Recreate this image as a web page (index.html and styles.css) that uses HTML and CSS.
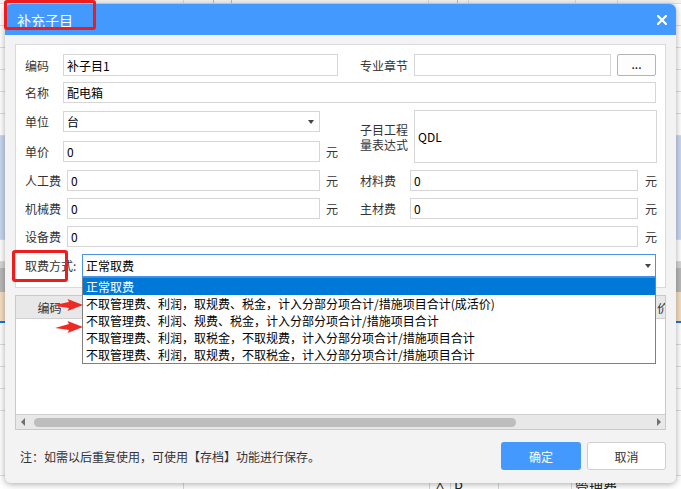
FILE: index.html
```html
<!DOCTYPE html>
<html lang="zh-CN">
<head>
<meta charset="utf-8">
<title>补充子目</title>
<link rel="stylesheet" href="styles.css">
</head>
<body>
<div class="app">
  <div class="app-row app-top">
    <span class="c c184"></span><span class="c c30 orange"></span><span class="c c18 orange"></span><span class="c c197"></span><span class="c c29 orange"></span><span class="c c11"></span><span class="c c107">¥ 2.00</span><span class="c c42">正</span><span class="c cflex">吸岸剧电箱</span>
  </div>
  <div class="app-row"></div>
  <div class="app-row"></div>
  <div class="app-row"></div>
  <div class="app-row"></div>
  <div class="app-row"></div>
  <div class="app-row"></div>
  <div class="app-band band-blue"></div>
  <div class="app-row"></div>
  <div class="app-band band-gray"></div>
  <div class="app-band band-peach"></div>
  <div class="app-row"></div>
  <div class="app-row"></div>
  <div class="app-row"></div>
  <div class="app-row"></div>
  <div class="app-row app-bottom">
    <span class="c c184"></span><span class="c c246"></span><span class="c c21">∧</span><span class="c c48">P</span><span class="c c73"></span><span class="c cflex">管理费</span>
  </div>
</div>

<div class="dialog">
  <div class="titlebar">
    <span class="title">补充子目</span>
    <svg class="close" width="10" height="10" viewBox="0 0 10 10"><path d="M1 1 L9 9 M9 1 L1 9" stroke="#fff" stroke-width="2.2" stroke-linecap="square"/></svg>
  </div>
  <div class="dlg-body">
    <div class="panel">
      <div class="row r1">
        <span class="lbl w38">编码</span>
        <div class="box h22 w275">补子目1</div>
        <span class="sp22"></span>
        <span class="lbl w48">专业章节</span>
        <div class="box h22 w197 ml6"></div>
        <div class="dots ml6">...</div>
      </div>
      <div class="row mt6">
        <span class="lbl w38">名称</span>
        <div class="box w593">配电箱</div>
      </div>
      <div class="row block3 mt7">
        <div class="leftcol">
          <div class="row mt1">
            <span class="lbl w38">单位</span>
            <div class="box sel w257"><span class="val">台</span><span class="caret"></span></div>
          </div>
          <div class="row mt9">
            <span class="lbl w38">单价</span>
            <div class="box w257">0</div>
            <span class="unit ml6">元</span>
          </div>
        </div>
        <div class="lbl w48 two"><span class="ln">子目工程</span><span class="ln">量表达式</span></div>
        <div class="box area w243 ml6">QDL</div>
      </div>
      <div class="row mt7">
        <span class="lbl w42">人工费</span>
        <div class="box w253">0</div>
        <span class="unit ml6">元</span>
        <span class="sp22"></span>
        <span class="lbl w50">材料费</span>
        <div class="box w228">0</div>
        <span class="unit ml7">元</span>
      </div>
      <div class="row mt7">
        <span class="lbl w42">机械费</span>
        <div class="box w253">0</div>
        <span class="unit ml6">元</span>
        <span class="sp22"></span>
        <span class="lbl w50">主材费</span>
        <div class="box w228">0</div>
        <span class="unit ml7">元</span>
      </div>
      <div class="row mt7">
        <span class="lbl w42">设备费</span>
        <div class="box w571">0</div>
        <span class="unit ml7">元</span>
      </div>
      <div class="row mt7">
        <span class="lbl w57">取费方式:</span>
        <div class="combo">
          <div class="box sel focus w574 h23"><span class="val">正常取费</span><span class="caret"></span></div>
          <ul class="droplist">
            <li class="on">正常取费</li>
            <li>不取管理费、利润，取规费、税金，计入分部分项合计/措施项目合计(成活价)</li>
            <li>不取管理费、利润、规费、税金，计入分部分项合计/措施项目合计</li>
            <li>不取管理费、利润，取税金，不取规费，计入分部分项合计/措施项目合计</li>
            <li>不取管理费、利润，取规费，不取税金，计入分部分项合计/措施项目合计</li>
          </ul>
        </div>
      </div>
    </div>

    <div class="grid">
      <div class="grid-head">
        <span class="hc hc1">编码</span>
        <span class="hc hc2"></span>
        <span class="hc hc3">价</span>
      </div>
      <div class="grid-body"></div>
      <div class="hscroll">
        <span class="arr arr-l"></span>
        <span class="thumb"></span>
        <span class="arr arr-r"></span>
      </div>
    </div>

    <div class="footer">
      <span class="note">注：如需以后重复使用，可使用【存档】功能进行保存。</span>
      <span class="btn ok">确定</span>
      <span class="btn cancel">取消</span>
    </div>
  </div>
</div>

<div class="mark mark-title"></div>
<div class="mark mark-fee"></div>
<svg class="redarrow ra1" width="31" height="12" viewBox="0 0 31 12"><polygon points="0,6.5 17,3 15.5,0 31,6 15.5,12 17,9" fill="#ee2a24"/></svg>
<svg class="redarrow ra2" width="28" height="12" viewBox="0 0 28 12"><polygon points="0,7 14,3 12.5,0 28,6 12.5,12 14,9" fill="#ee2a24"/></svg>
</body>
</html>
```

FILE: styles.css
```css
* { box-sizing: border-box; }
html, body { margin: 0; padding: 0; }
body {
  width: 681px;
  height: 489px;
  overflow: hidden;
  position: relative;
  background: #fff;
  font-family: "Noto Sans CJK SC", "Microsoft YaHei", sans-serif;
  font-size: 12px;
  color: #333;
}

/* ---------- background application ---------- */
.app {
  height: 489px;
  display: flex;
  flex-direction: column;
}
.app-row {
  height: 22px;
  flex: none;
  border-bottom: 1px solid #dedede;
  display: flex;
}
.app-top {
  height: 24px;
  margin-top: -20px;
  background: #f2f2f2;
  align-items: flex-end;
  font-size: 13px;
  line-height: 12px;
  color: #222;
}
.app-bottom {
  margin-top: auto;
  height: 14px;
  border-bottom: none;
  border-top: 1px solid #dedede;
  font-size: 14px;
  line-height: 22px;
  color: #222;
}
.c { flex: none; height: 100%; border-right: 1px solid #d8d8d8; white-space: nowrap; overflow: hidden; padding-left: 3px; }
.c.orange { border-right-color: #f0b060; }
.c184 { width: 184px; }
.c30 { width: 30px; }
.c18 { width: 18px; }
.c197 { width: 197px; }
.c29 { width: 29px; }
.c11 { width: 11px; }
.c107 { width: 107px; padding-left: 21px; }
.c42 { width: 42px; padding-left: 27px; }
.c246 { width: 246px; }
.c21 { width: 21px; }
.c48 { width: 48px; }
.c73 { width: 73px; }
.cflex { flex: 1; border-right: none; }
.app-band { flex: none; }
.band-blue { height: 104px; background: #c9d8ef; border-bottom: 1px solid #dedede; }
.band-gray { height: 30px; background: #b9b9b9; border-top: 6px solid #d6d6d6; }
.band-peach { height: 31px; background: #f5dfc4; border-bottom: 2px solid #1a73e8; }

/* ---------- dialog ---------- */
.dialog {
  position: absolute;
  left: 5px;
  top: 4px;
  width: 671px;
  height: 479px;
  background: #f3f3f3;
  border-radius: 6px;
  box-shadow: 0 1px 7px rgba(0, 0, 0, 0.35);
  display: flex;
  flex-direction: column;
  overflow: hidden;
}
.titlebar {
  height: 31px;
  flex: none;
  background: #4499ff;
  display: flex;
  align-items: center;
  justify-content: space-between;
  padding: 1px 9px 0 12px;
  color: #fff;
}
.title { font-size: 14px; }
.close { display: block; }

.dlg-body {
  flex: 1;
  padding: 9px 10px 0;
  display: flex;
  flex-direction: column;
}
.panel {
  height: 244px;
  flex: none;
  background: #fff;
  border: 1px solid #dadada;
  padding: 9px 0 0 9px;
}
.row { display: flex; align-items: center; }
.lbl { flex: none; color: #333; white-space: nowrap; }
.lbl.two { display: flex; flex-direction: column; justify-content: center; }
.ln { display: block; height: 15px; line-height: 15px; }
.w38 { width: 38px; }
.w42 { width: 42px; }
.w48 { width: 48px; }
.w50 { width: 50px; }
.w57 { width: 57px; }
.sp22 { width: 22px; flex: none; }
.ml6 { margin-left: 6px; }
.ml7 { margin-left: 7px; }
.mt1 { margin-top: 1px; }
.mt6 { margin-top: 6px; }
.mt7 { margin-top: 7px; }
.mt9 { margin-top: 9px; }

.box {
  flex: none;
  height: 21px;
  border: 1px solid #d6d6d6;
  background: #fff;
  display: flex;
  align-items: center;
  padding: 0 3px;
  color: #000;
  white-space: nowrap;
}
.h22 { height: 22px; }
.h23 { height: 23px; }
.w197 { width: 197px; }
.w228 { width: 228px; }
.w243 { width: 243px; }
.w253 { width: 253px; }
.w257 { width: 257px; }
.w275 { width: 275px; }
.w571 { width: 571px; }
.w574 { width: 574px; }
.w593 { width: 593px; }
.unit { flex: none; color: #333; }

.dots {
  flex: none;
  width: 39px;
  height: 22px;
  border: 1px solid #b4b4b4;
  border-radius: 2px;
  background: #fdfdfd;
  display: flex;
  align-items: center;
  justify-content: center;
  color: #000;
  line-height: 1;
  padding-bottom: 3px;
}

.block3 { align-items: stretch; height: 53px; }
.leftcol { width: 335px; flex: none; display: flex; flex-direction: column; }
.area { height: 53px; }

.sel { justify-content: space-between; padding-right: 5px; }
.caret {
  width: 0;
  height: 0;
  border-left: 3.5px solid transparent;
  border-right: 3.5px solid transparent;
  border-top: 4px solid #444;
}
.focus { border-color: #4a94e8; padding-right: 4px; }

.combo { position: relative; flex: none; }
.droplist {
  position: absolute;
  left: 0;
  top: 23px;
  width: 574px;
  margin: 0;
  padding: 0;
  list-style: none;
  background: #fff;
  border: 1px solid #7f7f7f;
  z-index: 5;
}
.droplist li {
  height: 17px;
  line-height: 17px;
  padding-left: 3px;
  color: #000;
  white-space: nowrap;
}
.droplist li.on { background: #0078d7; color: #fff; }

/* ---------- grid ---------- */
.grid {
  margin-top: 7px;
  height: 135px;
  flex: none;
  border: 1px solid #c9c9c9;
  background: #fff;
  display: flex;
  flex-direction: column;
}
.grid-head {
  height: 23px;
  flex: none;
  background: #e8e8e8;
  border-bottom: 1px solid #d0d0d0;
  display: flex;
}
.hc { height: 100%; display: flex; align-items: center; color: #333; border-right: 1px solid #cfcfcf; }
.hc1 { width: 68px; justify-content: center; }
.hc2 { flex: 1; }
.hc3 { width: 9px; border-right: none; padding-left: 1px; overflow: hidden; }
.grid-body { flex: 1; }
.hscroll {
  height: 15px;
  flex: none;
  background: #e8e8e8;
  border-top: 1px solid #cdcdcd;
  display: flex;
  align-items: center;
  padding: 0 4px 0 5px;
}
.arr { width: 0; height: 0; border-top: 4px solid transparent; border-bottom: 4px solid transparent; flex: none; }
.arr-l { border-right: 4px solid #707070; }
.arr-r { border-left: 4px solid #707070; margin-left: auto; }
.thumb {
  width: 482px;
  height: 9px;
  margin-left: 9px;
  border-radius: 5px;
  background: #bdbdbd;
}

/* ---------- footer ---------- */
.footer {
  margin-top: 12px;
  height: 28px;
  display: flex;
  align-items: center;
  padding-left: 5px;
}
.note { flex: 1; color: #333; }
.btn {
  height: 28px;
  border-radius: 3px;
  display: flex;
  align-items: center;
  justify-content: center;
  flex: none;
}
.ok { width: 80px; background: #4499ff; color: #fff; }
.cancel { width: 79px; margin-left: 6px; background: #fff; border: 1px solid #cfcfcf; color: #333; }

/* ---------- annotations ---------- */
.mark {
  position: absolute;
  border: 3px solid #ee1c1c;
  border-radius: 3px;
  z-index: 10;
}
.mark-title { left: 4px; top: 0; width: 92px; height: 30px; }
.mark-fee { left: 12px; top: 250px; width: 56px; height: 32px; }
.redarrow { position: absolute; z-index: 10; display: block; }
.ra1 { left: 52px; top: 299px; }
.ra2 { left: 55px; top: 321px; }
```
